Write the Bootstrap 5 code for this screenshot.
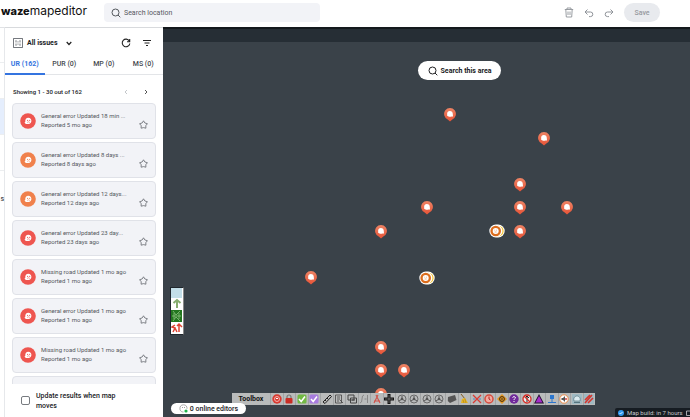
<!DOCTYPE html>
<html lang="en">
<head>
<meta charset="utf-8">
<meta name="viewport" content="width=device-width, initial-scale=1">
<title>Waze Map Editor</title>
<link href="https://cdn.jsdelivr.net/npm/bootstrap@5.3.0/dist/css/bootstrap.min.css" rel="stylesheet">
<style>
body{font-family:Roboto,"Open Sans",sans-serif;font-size:7px;line-height:10px;color:#202124}
button{font:inherit;color:inherit;background:none;border:0;padding:0;display:flex;align-items:center;justify-content:center}
svg{display:block;flex:none}
.topbar{height:27px}
.brand{font:400 12px/16px Inter,sans-serif;color:#111;width:104px;padding-left:1px;padding-bottom:6px}
.brand b{font-weight:800;font-size:11px}
.searchbox{width:216px;height:19px;background:#f2f3f7;border-radius:4px;padding:0 7px;gap:3px;margin-bottom:2px;color:#55595e}
.searchbox input{border:0;background:none;outline:0;font-size:7px;padding:0;width:100%}
.searchbox input::placeholder{color:#55595e;opacity:1}
.tools{gap:10px;color:#8f9399;padding-right:30px;padding-bottom:2px}
.save{width:36px;height:19px;border-radius:10px;background:#e8eaee;color:#96999e;font-weight:500}
.rail{width:5px;border-right:1px solid #e6e8eb;border-top:1px solid #e0e2e5;padding-top:34px}
.rail i{height:36px;border-top:1px solid #eceef0;font-style:normal;direction:rtl;line-height:8px}
.rail i.on{background:#e5eefd}
.panel{width:158px;border-top:1px solid #d8dadd}
.issues-head{height:28px;padding:2px 12px 0 8px}
.tabs{height:19px;border-bottom:1px solid #e3e5e8;font-weight:500;color:#45494e;line-height:17px}
.tabs button{flex:1;padding-bottom:2px}
.tabs .active{color:#3474e0;border-bottom:2px solid #3474e0;margin-bottom:-1px;padding-bottom:0;font-weight:700}
.showing{height:28px;padding:6px 15px 0 8px;font-size:6px;font-weight:500}
.issues{padding:0 7px;gap:3px;overflow:hidden;flex:1 1 0;min-height:0}
.issue{height:36px;flex:none;background:#f2f3f7;border:1px solid #e0e2e8;border-radius:4px;padding:0 7px;gap:5px;font-size:6px;line-height:9px;color:#54585e}
.issue div{padding-bottom:2px}
.face{color:#ee5650}
.face.warm{color:#f0814c}
.issue .star{margin-top:6px}
.update{height:33px;padding:0 16px;gap:6px;font-weight:500}
.update input{appearance:none;width:9px;height:9px;border:1px solid #777b80;border-radius:2px;margin:0}
.update input:checked{background:#3474e0}
.map{background:#3a4249;min-width:0}
.strip{height:15px;background:#262e35;border-top:2px solid #14191d}
.pin,.find,.layers,.editors,.toolbox,.build{position:absolute}
.pin{transform:translate(-50%,-50%)}
.find{left:255px;top:34px;width:83px;height:19px;border-radius:10px;background:#fff;font-weight:700;gap:3px}
.layers{left:7px;top:260px;border:1px solid #20272d;border-right-color:#888}
.toolbox{left:69px;bottom:12px;width:363px;height:12px;background:#b9bbbb;font-weight:700;color:#111}
.toolbox span{width:38px;text-align:center}
.toolbox button{flex:1;border-left:1px solid #a1a4a5;height:12px}
.editors{left:8px;bottom:3px;width:75px;height:11px;border-radius:6px;background:#fff;gap:2px;font-weight:500}
.build{right:0;bottom:0;width:75px;height:9px;background:#161c22;color:#c6c9cb;gap:3px;padding-left:3px;white-space:nowrap;font-size:6px;line-height:8px;border-top-left-radius:2px}
</style>
<script src="https://cdn.jsdelivr.net/npm/bootstrap@5.3.0/dist/js/bootstrap.bundle.min.js"></script>
</head>
<body class="vh-100 d-flex flex-column overflow-hidden bg-white">
<svg width="0" height="0" class="position-absolute" aria-hidden="true">
<symbol id="glass" viewBox="0 0 10 10"><circle cx="4.5" cy="4.5" r="3.5" fill="none" stroke="currentColor"/><path d="M7 7l2.3 2.3" stroke="currentColor"/></symbol>
<symbol id="star" viewBox="0 0 9 9"><path d="M4.5.8L5.9 3l2.500.7-1.600 2 .1 2.500-2.400-.6-2.400.6.1-2.500-1.600-2L3.100 3z" fill="none" stroke="#63676d" stroke-width=".8" stroke-linejoin="round"/></symbol>
<symbol id="face" viewBox="0 0 16 16"><circle cx="8" cy="8" r="7.8" fill="currentColor"/><path d="M5.3 8.8C5 6 6.4 4.7 8.3 4.7c2 0 3.1 1.5 3.1 3.1 0 2-1.2 3.1-3 3.3H6.2c-.9-.3-1.5-1-1.7-1.8.4 0 .7-.1.8-.5z" fill="#fff"/><circle cx="7.6" cy="7.3" r=".6" fill="currentColor"/><circle cx="9.7" cy="7.3" r=".6" fill="currentColor"/><path d="M7.2 9.4q1.5-1.2 2.6 0" fill="none" stroke="currentColor" stroke-width=".6"/></symbol>
<linearGradient id="warm" x2="0" y2="1"><stop stop-color="#ee8465"/><stop offset="1" stop-color="#e65337"/></linearGradient>
<symbol id="pin" viewBox="0 0 12 14"><path d="M6 13.5L3.7 11.4A5.9 5.9 0 1 1 8.3 11.4z" fill="url(#warm)"/><path d="M3.2 6.4C2.8 4.3 4 3 5.8 3c1.9 0 3 1.3 3 2.9L9 8.5l-1.4-.1C5.7 9 3.8 8.6 3 7.2z" fill="#fff"/></symbol>
<symbol id="cluster" viewBox="0 0 16 14"><rect x=".3" y=".5" width="15.4" height="13" rx="6.5" fill="#fff"/><circle cx="9.3" cy="7" r="5.3" fill="#f2bd19"/><circle cx="7.8" cy="7" r="5.7" fill="#fff"/><circle cx="6.7" cy="7" r="5.3" fill="#dc6d1d"/><circle cx="6.7" cy="7" r="3" fill="#fff"/><path d="M5.4 6.2h.8m1 0h.8M5.6 8h2" stroke="#dc6d1d" stroke-width=".5"/></symbol>
</svg>

<header class="topbar d-flex align-items-center flex-shrink-0">
  <div class="brand"><b>waze</b>mapeditor</div>
  <label class="searchbox d-flex align-items-center"><svg width="10" height="10"><use href="#glass"/></svg><input type="text" placeholder="Search location" aria-label="Search location"></label>
  <div class="tools d-flex align-items-center ms-auto">
    <button aria-label="Delete"><svg width="10" height="11" viewBox="0 0 10 11" fill="none" stroke="currentColor" stroke-width=".9"><path d="M.8 2.5h8.4M3 2.5V1h4v1.5M1.8 2.5l.5 7.5h5.4l.5-7.5M4 4.5V8m2-3.500V8"/></svg></button>
    <button aria-label="Undo"><svg width="10" height="10" viewBox="0 0 10 10" fill="none" stroke="currentColor"><path d="M3.500 1.500L1 4l2.500 2.500M1 4h5.500a2.300 2.300 0 0 1 0 4.600H5"/></svg></button>
    <button aria-label="Redo"><svg width="10" height="10" viewBox="0 0 10 10" fill="none" stroke="currentColor"><path d="M6.500 1.500L9 4 6.500 6.500M9 4H3.500a2.300 2.300 0 0 0 0 4.600H5"/></svg></button>
    <button class="save">Save</button>
  </div>
</header>

<main class="d-flex flex-fill overflow-hidden">
  <nav class="rail d-flex flex-column flex-shrink-0" aria-label="Sections"><i></i><i class="on"></i><i></i><i class="pt-4">s</i></nav>
  <aside class="panel d-flex flex-column flex-shrink-0">
    <div class="issues-head d-flex align-items-center">
      <svg width="10" height="10" viewBox="0 0 9 9" fill="none" stroke="#666a70" stroke-width=".8"><rect x=".5" y=".5" width="8" height="8"/><path d="M2.700 2v2m0 1v2M6.300 2v2m0 1v2M4.500 3v1m0 1v1"/></svg>
      <button class="fw-bold ms-1">All issues<svg class="ms-2" width="6" height="5" viewBox="0 0 6 5"><path d="M.7 1L3 3.500 5.300 1" fill="none" stroke="#222" stroke-width="1.200"/></svg></button>
      <button class="ms-auto" aria-label="Refresh"><svg width="10" height="10" viewBox="0 0 10 10"><path d="M8.300 3A3.800 3.800 0 1 0 8.800 5.500M8.700 1v2.700H6" fill="none" stroke="#222" stroke-width="1.100"/></svg></button>
      <button class="ms-2 ps-1" aria-label="Filter"><svg width="8" height="8" viewBox="0 0 8 8"><path d="M0 1.500h8M1.500 4h5M3 6.500h2" stroke="#222"/></svg></button>
    </div>
    <div class="tabs d-flex" role="tablist"><button role="tab" class="active">UR (162)</button><button role="tab">PUR (0)</button><button role="tab">MP (0)</button><button role="tab">MS (0)</button></div>
    <div class="showing d-flex align-items-center"><span>Showing 1 - 30 out of 162</span>
      <button class="ms-auto me-3" aria-label="Previous"><svg width="4" height="6" viewBox="0 0 4 6"><path d="M3 1L1 3l2 2" fill="none" stroke="#c4c7ca"/></svg></button>
      <button aria-label="Next"><svg width="4" height="6" viewBox="0 0 4 6"><path d="M1 1l2 2-2 2" fill="none" stroke="#555"/></svg></button></div>
    <div class="issues d-flex flex-column" id="issues"></div>
    <label class="update d-flex align-items-center"><input type="checkbox"><span>Update results when map<br>moves</span></label>
  </aside>
  <section class="map position-relative flex-fill overflow-hidden" aria-label="Map">
    <div class="strip"></div>
    <div id="pins"></div>
    <button class="find"><svg width="10" height="10"><use href="#glass"/></svg>Search this area</button>
    <div class="layers"><svg width="12" height="46" viewBox="0 0 12 46"><path fill="#fff" d="M0 0h12v46H0z"/><path fill="#c3dfe9" d="M0 0h11v10H0z"/><path d="M6 20v-7M2.500 15L6 12l3.500 3" fill="none" stroke="#86ad6f" stroke-width="2"/><path fill="#23761f" d="M0 22h11v12H0z"/><path d="M2 23l3 4 4-4M2 33l3-4 4 4M1 28h9M3 25v6m5-6v6" fill="none" stroke="#8dc482" stroke-width=".8"/><path d="M2 44l2-4-3-1 3-2m0 3l2 4m2 0v-8m-2 2l2-2 3 3" fill="none" stroke="#de4534" stroke-width="1.500"/></svg></div>
    <div class="toolbox d-flex align-items-center" id="toolbox"><span>Toolbox</span></div>
    <button class="editors"><svg width="9" height="9" viewBox="0 0 9 9"><path d="M1 5.500C.5 2.500 2 .8 4.500.8s3.700 1.700 3.500 4M1 5.500C1.500 7.500 3 8 4.500 8" fill="none" stroke="#888" stroke-width=".7"/><path d="M3 3.500h.8m1.400 0H6" stroke="#888"/><circle cx="7" cy="7" r="1.600" fill="#21b34c"/></svg>0 online editors</button>
    <div class="build d-flex align-items-center"><svg width="6" height="6" viewBox="0 0 6 6"><circle cx="3" cy="3" r="3" fill="#3199ef"/><path d="M1.500 3l1 1 2-2" fill="none" stroke="#fff" stroke-width=".8"/></svg>Map build: in 7 hours <svg width="5" height="6" viewBox="0 0 5 6"><path d="M.5 1h4v4.500h-4z" fill="none" stroke="#c6c9cb" stroke-width=".8"/></svg></div>
  </section>
</main>
<script>
const issues=[['General error Updated 18 min ...','5 mo',0],['General error Updated 8 days ...','8 days',1],['General error Updated 12 days...','12 days',1],['General error Updated 23 day...','23 days',0],['Missing road Updated 1 mo ago','1 mo',0],['General error Updated 1 mo ago','1 mo',0],['Missing road Updated 1 mo ago','1 mo',0],['','',0]];
document.getElementById('issues').innerHTML=issues.map(([t,r,w])=>`<article class="issue d-flex align-items-center">${t?`<svg class="face ${w?'warm':''}" width="16" height="16"><use href="#face"/></svg><div class="text-nowrap">${t}<br>Reported ${r} ago</div><button class="star ms-auto" aria-label="Follow"><svg width="9" height="9"><use href="#star"/></svg></button>`:''}</article>`).join('');
const pins=[[287,88],[381,112],[357,158],[357,181],[404,181],[264,181],[218,205],[357,205],[148,251],[218,321],[218,344],[241,344],[218,368],[334,204,1],[264,251,1]];
document.getElementById('pins').innerHTML=pins.map(([x,y,c])=>`<button class="pin" aria-label="Map issue" style="left:${x}px;top:${y}px"><svg width="${c?16:12}" height="14"><use href="#${c?'cluster':'pin'}"/></svg></button>`).join('');
const wheel='<circle cx="5" cy="5" r="4" fill="none" stroke="#555" stroke-width=".8"/><path d="M5 5V2M5 5L2 7m3-2l3 2" stroke="#555"/><circle cx="5" cy="5" r="1.300" fill="#555"/>';
const check=c=>`<rect x=".5" y=".5" width="9" height="9" rx="1.500" fill="${c}"/><path d="M2 5l2.200 2.500L8 2.500" fill="none" stroke="#fff" stroke-width="1.500"/>`;
const tools=[
['Closure','<circle cx="5" cy="5" r="4.700" fill="#d83a31"/><circle cx="5" cy="5" r="2.500" fill="none" stroke="#f7c9c5" stroke-width=".8"/><path d="M4 4.500h2" stroke="#fff"/>'],
['Lock','<path d="M3 5V3a2 2 0 0 1 4 0v2" fill="none" stroke="#777" stroke-width="1.200"/><rect x="1.500" y="4" width="7" height="5.500" rx="1" fill="#c92d25"/>'],
['Approve',check('#72b944')],['Validate',check('#a77bdf')],
['Measure','<path d="M1 8L8 1l1.500 1.500L3 9.500z" fill="#bbb" stroke="#222"/><path d="M3 6l1 1m1-3l1 1" stroke="#222"/>'],
['List','<path d="M1.500 1h6v8h-6zM3 3h3M3 5h3M3 7h2M6 6l3 3" fill="none" stroke="#444" stroke-width=".8"/>'],
['Copy','<path d="M1 1h6v5H1zM3.500 4h6v5h-6zM5 6h3" fill="none" stroke="#444"/>'],
['Curve','<path d="M1 9q2 0 2-4t2-4M5.500 5h2M8.500 1v8" fill="none" stroke="#888"/>'],
['Cut','<path d="M2 9l4-8m2 8L4 1M2 7h6" fill="none" stroke="#cf5149" stroke-width="1.100"/>'],
['Add','<path d="M5 0v10M0 5h10" stroke="#111" stroke-width="3"/><path d="M5 1v8M1 5h8" stroke="#aaa" stroke-width=".5"/>'],
['Roundabout',wheel],['Roundabout 2',wheel],['Roundabout 3',wheel],['Roundabout 4',wheel],
['Area','<path d="M1 3l7-2 1.500 5L3 9 .8 7z" fill="#555"/>'],
['Clean','<path d="M2 0l4 5" stroke="#805a20"/><path d="M3 5l3-1 3 5H2z" fill="#e6b421"/><path d="M4 6l1 3m1-4l1 4" stroke="#9b741c" stroke-width=".5"/>'],
['Remove','<path d="M1 1l8 8m0-8L1 9" stroke="#d93b35" stroke-width="1.300"/><path d="M1 5h2m4 0h2" stroke="#4489c8"/>'],
['Time','<circle cx="5" cy="5" r="4" fill="#f3aaa0" stroke="#d64c3e" stroke-width="1.500"/><path d="M5 2.500V5l1.500 1" stroke="#a22" fill="none"/>'],
['Warning','<path d="M5 0l5 5-5 5-5-5z" fill="#e5961e"/><circle cx="5" cy="5" r="2.400" fill="none" stroke="#3b2b13"/><circle cx="5" cy="5" r=".8" fill="#222"/>'],
['Help','<circle cx="5" cy="5" r="4.700" fill="#70299b"/><path d="M3.500 3.500q1.500-2 3 0c0 1.200-1.500 1-1.500 2.500m0 1v1" fill="none" stroke="#fff"/>'],
['No turn','<circle cx="5" cy="5" r="4" fill="#eee" stroke="#d52e27" stroke-width="1.300"/><path d="M5 2v6M3 4l2-2 2 2" fill="none" stroke="#222"/><path d="M2 2l6 6" stroke="#d52e27" stroke-width="1.200"/>'],
['Alert','<path d="M5 0l5 9.500H0z" fill="#20102c"/><path d="M5 2L8.500 8.500h-7z" fill="#a62cca"/>'],
['Place','<rect x="3" y="1" width="4" height="4" fill="#2b76ce"/><path d="M5 4v4M1 8.500h8" stroke="#2b76ce"/>'],
['Mute','<circle cx="5" cy="5" r="4.200" fill="#fff" stroke="#ec8c48"/><path d="M2.500 4H4l2-2v6L4 6H2.500z" fill="#555"/><path d="M6 4l2 2m0-2L6 6" stroke="#c33" stroke-width=".7"/>'],
['Ghost','<path d="M0 0h10v10H0z" fill="#9fb9c2"/><path d="M2 7C1 4 3 2 5 2s4 2 3 5z" fill="#dcebf0" stroke="#57757f" stroke-width=".7"/><path d="M2 8.500h6" stroke="#57757f"/>'],
['Hide','<path d="M0 0h10v10H0z" fill="#9fb9c2"/><path d="M1 9l7-8M1 6l5-5M4 9l5-5" stroke="#d5342c" stroke-width="1.600"/>']];
document.getElementById('toolbox').insertAdjacentHTML('beforeend',tools.map(([n,p])=>`<button aria-label="${n}"><svg width="10" height="10" viewBox="0 0 10 10">${p}</svg></button>`).join(''));
</script>
</body>
</html>
